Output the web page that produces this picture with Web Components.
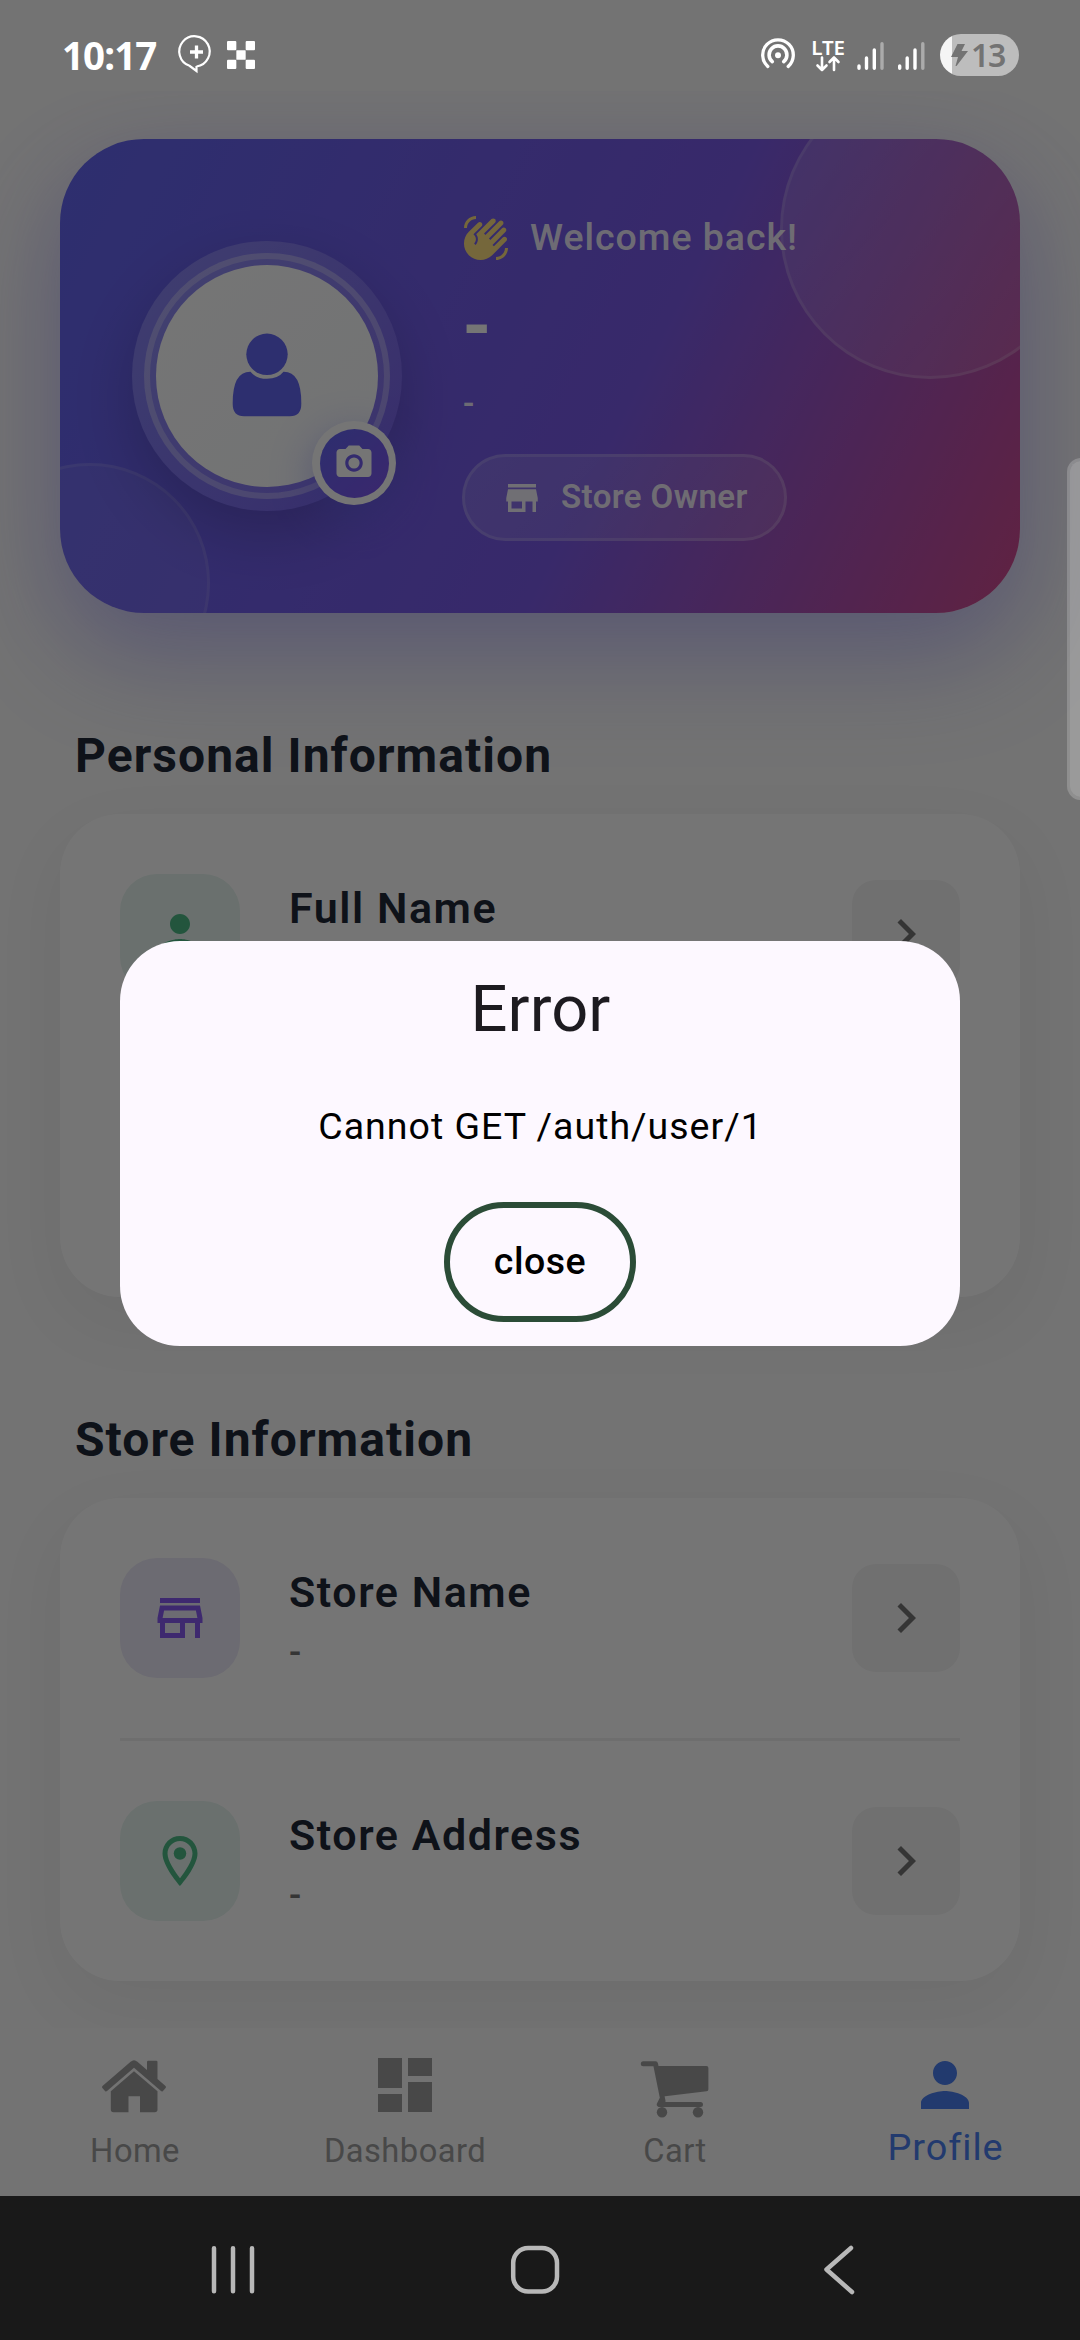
<!DOCTYPE html>
<html lang="en">
<head>
<meta charset="utf-8">
<title>Profile</title>
<style>
  html, body { margin: 0; padding: 0; }
  body { width: 1080px; height: 2340px; overflow: hidden; background: #fafafa; font-family: Roboto, "Liberation Sans", sans-serif; }
</style>
</head>
<body>
<profile-app></profile-app>
<script>
const define = (name, html, setup) => customElements.define(name, class extends HTMLElement {
  constructor() {
    super();
    const t = document.createElement('template');
    t.innerHTML = html;
    this.attachShadow({ mode: 'open' }).append(t.content.cloneNode(true));
  }
  connectedCallback() { if (setup) setup(this, this.shadowRoot); }
});

const ICONS = {
  person: '<path d="M12 12c2.21 0 4-1.79 4-4s-1.79-4-4-4-4 1.79-4 4 1.79 4 4 4zm0 2c-2.67 0-8 1.34-8 4v2h16v-2c0-2.66-5.33-4-8-4z"/>',
  chevron: '<path d="M10 6L8.59 7.41 13.17 12l-4.58 4.59L10 18l6-6z"/>',
  store: '<path d="M20 4H4v2h16V4zm1 10v-2l-1-5H4l-1 5v2h1v6h10v-6h4v6h2v-6h1zm-9 4H6v-4h6v4z"/>',
  storeOutline: '<path d="M18.36 9l.6 3H5.04l.6-3h12.72M20 4H4v2h16V4zm0 3H4l-1 5v2h1v6h10v-6h4v6h2v-6h1v-2l-1-5zM6 18v-4h6v4H6z"/>',
  place: '<path d="M12 2C8.13 2 5 5.13 5 9c0 5.25 7 13 7 13s7-7.75 7-13c0-3.87-3.13-7-7-7zM7 9c0-2.76 2.24-5 5-5s5 2.24 5 5c0 2.88-2.88 7.19-5 9.88C9.92 16.21 7 11.85 7 9z"/><circle cx="12" cy="9" r="2.5"/>',
  camera: '<circle cx="12" cy="12" r="3.2"/><path d="M9 2L7.17 4H4c-1.1 0-2 .9-2 2v12c0 1.1.9 2 2 2h16c1.1 0 2-.9 2-2V6c0-1.1-.9-2-2-2h-3.17L15 2H9zm3 15c-2.76 0-5-2.24-5-5s2.24-5 5-5 5 2.24 5 5-2.24 5-5 5z"/>',
  dashboard: '<path d="M3 13h8V3H3v10zm0 8h8v-6H3v6zm10 0h8V11h-8v10zm0-18v6h8V3h-8z"/>',
  wave: '<path d="M23 17c0 3.31-2.69 6-6 6v-1.5c2.48 0 4.5-2.02 4.5-4.5H23zM1 7c0-3.31 2.69-6 6-6v1.5C4.52 2.5 2.5 4.52 2.5 7H1zM8.01 4.32l-4.6 4.6c-3.22 3.22-3.22 8.45 0 11.67s8.45 3.22 11.67 0l7.07-7.07c.49-.49.49-1.28 0-1.77-.49-.49-1.28-.49-1.77 0l-4.42 4.42-.71-.71 6.54-6.54c.49-.49.49-1.28 0-1.77s-1.28-.49-1.77 0l-5.83 5.83-.71-.71 6.89-6.89c.49-.49.49-1.28 0-1.77s-1.28-.49-1.77 0l-6.89 6.89-.69-.69 5.48-5.48c.49-.49.49-1.28 0-1.77s-1.28-.49-1.77 0l-7.62 7.62c1.22 1.57 1.11 3.84-.33 5.28l-.71-.71c1.17-1.17 1.17-3.07 0-4.24l-.35-.35 4.07-4.07c.49-.49.49-1.28 0-1.77-.48-.48-1.27-.48-1.76 0z"/>',
  /* the two below are on a 72-unit grid */
  home: '<path d="M31.6 12.7Q35 9.6 38.400 12.700L48 21V13q0-1.300 1.300-1.300h7.900q1.300 0 1.300 1.300V30l8 7q1 1 .1 2l-2.600 3q-1 1-2 .1L35 18.800 8 42.100q-1 .9-2-.1l-2.600-3q-.9-1 .1-2z"/><path d="M35 22.200L58.500 42.300V60.500q0 2.700-2.700 2.700H41V47.200H29.500V63.200H14.500q-2.700 0-2.700-2.700V42.300z"/>',
  cart: '<path d="M4.300 14.700H16.500L24 52" fill="none" stroke="currentColor" stroke-width="5" stroke-linecap="round" stroke-linejoin="round"/><path d="M18 17H67.500q1.900 0 1.900 1.900V40.300q0 1.800-1.800 2L24 47.500z"/><path d="M22.800 50.500L20.300 55.400H61.500" fill="none" stroke="currentColor" stroke-width="5" stroke-linecap="round" stroke-linejoin="round"/><circle cx="23" cy="63.200" r="5.200"/><circle cx="59" cy="63.200" r="5.200"/>'
};
define('ui-icon', `<style>
  :host { display: block; flex: none; }
  svg { display: block; fill: currentColor; }
</style><svg></svg>`, (el, root) => {
  const n = el.getAttribute('name'), s = el.getAttribute('size') || 60, g = (n === 'home' || n === 'cart') ? 72 : 24;
  const svg = root.querySelector('svg');
  svg.setAttribute('viewBox', `0 0 ${g} ${g}`);
  svg.setAttribute('width', s);
  svg.setAttribute('height', s);
  svg.innerHTML = ICONS[n];
});

define('status-bar', `<style>
  :host { display: flex; align-items: center; height: 91px; color: #fff; box-sizing: border-box; padding: 19px 61px 0 62px; justify-content: space-between; }
  .side { display: flex; align-items: center; height: 72px; }
  .time { font: 700 38.5px/72px "Noto Sans", "Open Sans", sans-serif; letter-spacing: -.9px; width: 114px; }
  .lte { width: 38px; margin: 0 10px 0 13px; display: flex; flex-direction: column; align-items: center; }
  .lte span { font: 600 20.500px/16px "Noto Sans", sans-serif; letter-spacing: -.1px; }
  svg { display: block; flex: none; }
  .bat { position: relative; width: 79px; height: 42px; border-radius: 21px; margin-left: 15px; box-sizing: border-box;
         background: linear-gradient(90deg, #f5f5f5 12px, #bdbdbd 12px); display: flex; align-items: center; padding-left: 11px; color: #737373; }
  .bat span { font: 600 32px/42px "Noto Sans", sans-serif; margin-left: 3px; letter-spacing: -1.200px; }
</style>
<div class="side">
  <div class="time">10:17</div>
  <svg width="42" height="44" viewBox="0 0 42 44" style="margin-top:-4px"><path d="M20.500 35.500v5l-7-5.200A15.200 15.200 0 1 1 20.500 36z" transform="translate(0 -.5)" fill="none" stroke="#fff" stroke-width="2.200"/><path d="M20.500 14.500v13M14 21h13" stroke="#fff" stroke-width="3.300"/></svg>
  <svg width="28" height="28" viewBox="0 0 27 27" style="margin-left:9px" fill="#fff"><rect width="9" height="9" rx="1"/><rect x="18" width="9" height="9" rx="1"/><rect x="9" y="9" width="9" height="9" rx=".5"/><rect y="18" width="9" height="9" rx="1"/><rect x="18" y="18" width="9" height="9" rx="1"/></svg>
</div>
<div class="side">
  <svg width="36" height="36" viewBox="0 0 36 36" fill="none" stroke="#fff" stroke-width="3.300" stroke-linecap="round"><path d="M7.800 29.500A15.300 15.300 0 1 1 28.200 29.500"/><path d="M12.300 24.600A8.900 8.900 0 1 1 23.700 24.600" stroke-width="3.600"/><circle cx="18" cy="18.300" r="3" fill="#fff" stroke="none"/></svg>
  <div class="lte"><span>LTE</span><svg width="26" height="17" viewBox="0 0 26 17" fill="none" stroke="#fff" stroke-width="2.600" stroke-linecap="round" stroke-linejoin="round"><path d="M7 2.500V15M2.500 10.500L7 15l4.500-4.500M19 15V2.500M14.500 7L19 2.500 23.500 7"/></svg></div>
  <svg width="68" height="32" viewBox="0 0 68 32" stroke="#fff" stroke-width="3.400" stroke-linecap="round"><path d="M2 27v2.300M9.500 19v10.300M17.300 11v18.300M42.700 27v2.300M50.200 19v10.300M58 11v18.300"/><path d="M25 4.700v24.600M65.800 4.700v24.600" opacity=".4"/></svg>
  <div class="bat"><svg width="17" height="22" viewBox="0 0 17 22" fill="#737373"><path d="M6.500 0h7.500L10.500 7H17L5.500 22H4.500L7 13H0z"/></svg><span>13</span></div>
</div>`);

define('user-avatar', `<style>
  :host { display: block; position: relative; width: 270px; height: 270px; flex: none; }
  .halo { box-sizing: border-box; width: 270px; height: 270px; padding: 12px; border-radius: 50%;
          background: linear-gradient(135deg, rgba(255,255,255,.24), rgba(255,255,255,.03)); box-shadow: 0 24px 60px rgba(0,0,0,.18); }
  .ring { box-sizing: border-box; width: 246px; height: 246px; border: 6px solid rgba(255,255,255,.32); border-radius: 50%; padding: 6px; background: rgba(255,255,255,.07); background-clip: padding-box; }
  .face { width: 222px; height: 222px; border-radius: 50%; background: linear-gradient(135deg, #fff, #f8fafc); display: flex; align-items: center; justify-content: center; }
  .face svg { display: block; margin-bottom: 8px; }
  .cam { position: absolute; left: 180px; top: 180px; width: 84px; height: 84px; box-sizing: border-box; border-radius: 50%; display: flex; align-items: center; justify-content: center;
         background: #fff; box-shadow: 0 12px 42px rgba(99,102,241,.4); }
  .cam div { width: 69px; height: 69px; border-radius: 50%; background: linear-gradient(135deg, #6366f1, #8055ee); display: flex; align-items: center; justify-content: center; color: #fff; }
</style>
<div class="halo"><div class="ring"><div class="face">
  <svg width="90" height="90" viewBox="0 0 90 90" fill="#6366f1"><circle cx="45" cy="27.300" r="20.700"/><path d="M28.500 44.800Q34 51.800 45 51.800T61.500 44.800Q79.300 44.500 79.300 76V77Q79.300 89.300 68 89.300H22Q10.700 89.300 10.700 77V76Q10.700 44.500 28.500 44.800z"/></svg>
</div></div></div>
<div class="cam"><div><ui-icon name="camera" size="42"></ui-icon></div></div>`);

define('hero-card', `<style>
  :host { display: block; height: 474px; border-radius: 84px; box-shadow: 0 45px 104px rgba(99,102,241,.3), 0 18px 90px rgba(139,92,246,.14); }
  .clip { position: relative; height: 474px; border-radius: 84px; overflow: hidden; background: linear-gradient(116.300deg, #6366f1, #7a5ae8 58%, #d24a8e); }
  .blob { position: absolute; box-sizing: border-box; border-radius: 50%; border: 3px solid rgba(255,255,255,.15); }
  .a { width: 300px; height: 300px; right: -60px; top: -60px; background: linear-gradient(135deg, rgba(255,255,255,.15), rgba(255,255,255,.08)); background-clip: padding-box; border-color: rgba(255,255,255,.24); }
  .b { width: 240px; height: 240px; left: -90px; bottom: -90px; background: rgba(255,255,255,.06); background-clip: padding-box; }
  .row { position: relative; display: flex; align-items: center; height: 474px; padding-left: 72px; gap: 60px; }
  .info { display: flex; flex-direction: column; align-items: flex-start; height: 474px; box-sizing: border-box; padding-top: 74px; color: #fff; }
  .hi { display: flex; align-items: center; gap: 20px; height: 50px; color: #ffe082; }
  .hi span { font-weight: 500; font-size: 37.500px; letter-spacing: .970px; color: rgba(255,255,255,.9); line-height: 48px; height: 50px; }
  .name { font-weight: 800; font-size: 71px; line-height: 84px; margin-top: 21px; }
  .mail { font-weight: 500; font-size: 33px; line-height: 40px; margin-top: 16px; color: rgba(255,255,255,.9); padding-left: 1px; }
  .pill { box-sizing: border-box; height: 87px; margin-top: 30px; border: 3px solid rgba(255,255,255,.28); border-radius: 44px; padding: 0 36px; display: flex; align-items: center; gap: 18px;
          background: linear-gradient(135deg, rgba(255,255,255,.14), rgba(255,255,255,.1)); background-clip: padding-box; color: rgba(255,255,255,.9); }
  .pill span { font-weight: 600; font-size: 33px; letter-spacing: .420px; line-height: 79px; height: 81px; }
</style>
<div class="clip">
  <div class="blob a"></div><div class="blob b"></div>
  <div class="row">
    <user-avatar></user-avatar>
    <div class="info">
      <div class="hi"><ui-icon name="wave" size="48"></ui-icon><span>Welcome back!</span></div>
      <div class="name">-</div>
      <div class="mail">-</div>
      <div class="pill"><ui-icon name="store" size="42"></ui-icon><span>Store Owner</span></div>
    </div>
  </div>
</div>`);

define('section-title', `<style>
  :host { display: block; padding-left: 15px; font-weight: 700; font-size: 48px; letter-spacing: 1.050px; line-height: 56px; color: #1f2937; }
</style><slot></slot>`);

define('info-card', `<style>
  :host { display: flex; flex-direction: column; gap: 60px; box-sizing: border-box; padding: 60px; background: #fff; border-radius: 60px; box-shadow: 0 24px 72px rgba(0,0,0,.06); }
</style><slot></slot>`);

define('info-divider', `<style>:host { display: block; height: 3px; background: #f0f0f0; }</style>`);

define('info-row', `<style>
  :host { display: flex; align-items: center; height: 120px; }
  .tile { width: 120px; height: 120px; border-radius: 37px; display: flex; align-items: center; justify-content: center; color: var(--tint); background: var(--wash); }
  .text { flex: 1; padding-left: 49px; height: 120px; }
  .label { font-weight: 600; font-size: 43px; letter-spacing: 1.550px; line-height: 50px; padding-top: 9px; color: #1f2937; }
  .value { font-weight: 500; font-size: 36px; line-height: 42px; margin-top: 15px; color: #757575; }
  .go { width: 108px; height: 108px; border-radius: 24px; background: #f5f5f5; display: flex; align-items: center; justify-content: center; color: #757575; }
</style>
<div class="tile"><slot></slot></div>
<div class="text"><div class="label"></div><div class="value"></div></div>
<div class="go"><ui-icon name="chevron" size="60"></ui-icon></div>`, (el, root) => {
  root.querySelector('.label').textContent = el.getAttribute('label');
  root.querySelector('.value').textContent = el.getAttribute('value') || '';
});

define('nav-item', `<style>
  :host { display: flex; flex-direction: column; align-items: center; width: 270px; box-sizing: border-box; padding-top: 21px; color: #9e9e9e; font-size: 32.700px; letter-spacing: .450px; }
  .l { line-height: 40px; margin-top: 10px; }
  :host([active]) { color: #4a7eef; font-size: 37.800px; letter-spacing: .950px; }
  :host([active]) .l { margin-top: 6px; padding-left: 1px; }
</style><ui-icon></ui-icon><div class="l"><slot></slot></div>`, (el, root) => {
  const i = document.createElement('ui-icon');
  i.setAttribute('name', el.getAttribute('icon'));
  i.setAttribute('size', 72);
  root.querySelector('ui-icon').replaceWith(i);
});

define('bottom-nav', `<style>
  :host { display: flex; height: 168px; background: #fafafa; position: relative; }
</style><slot></slot>`);

define('system-nav', `<style>
  :host { display: flex; height: 144px; background: #191919; align-items: center; padding: 0 204px; justify-content: space-between; }
  svg { display: block; fill: none; stroke: #b8b8b8; stroke-width: 4.500; stroke-linecap: round; stroke-linejoin: round; }
</style>
<svg width="58" height="60" viewBox="0 0 58 60"><path d="M10 10.200v43M29 10.200v43M48 10.200v43"/></svg>
<svg width="60" height="60" viewBox="0 0 60 60"><rect x="4.200" y="10" width="43.800" height="43.500" rx="15"/></svg>
<svg width="60" height="60" viewBox="0 0 60 60"><path d="M35 10L10.500 31.500 36 54"/></svg>`);

define('error-dialog', `<style>
  :host { display: flex; flex-direction: column; align-items: center; box-sizing: border-box; width: 840px; height: 405px; border-radius: 60px; background: #fdf8ff; color: #000; }
  .t { font-size: 65px; letter-spacing: .1px; line-height: 76px; margin-top: 30px; padding-left: 1px; color: #1d1b20; }
  .m { font-size: 37.500px; letter-spacing: 1px; line-height: 44px; margin-top: 57px; padding-left: 1px; }
  button { margin: 54px 0 0; width: 192px; height: 120px; box-sizing: border-box; border: 6px solid #2b4c37; border-radius: 60px; background: none; padding: 0 0 2px; font: 500 37.5px/106px Roboto, sans-serif; letter-spacing: .500px; color: #000; }
</style>
<div class="t">Error</div>
<div class="m">Cannot GET /auth/user/1</div>
<button>close</button>`);

define('profile-app', `<style>
  :host { display: block; position: relative; width: 1080px; height: 2340px; overflow: hidden; background: #fafafa; }
  .page { display: flex; flex-direction: column; height: 2340px; }
  .top { height: 91px; flex: none; }
  .body { height: 1937px; flex: none; box-sizing: border-box; padding: 48px 60px 0; overflow: hidden; }
  .body > section-title:nth-of-type(1) { margin-top: 115px; }
  .s1 { margin-top: 30px; height: 483px; }
  .t2 { margin-top: 115px; }
  .s2 { margin-top: 30px; }
  .scrim { position: absolute; inset: 0 0 144px 0; background: rgba(0,0,0,.54); display: flex; flex-direction: column; }
  .scrim error-dialog { margin: 850px auto 0; }
  .edge { position: absolute; right: -15px; top: 458px; width: 28px; height: 342px; box-sizing: border-box; border: 3px solid rgba(255,255,255,.2); border-radius: 15px; background: rgba(255,255,255,.28); background-clip: padding-box; }
</style>
<div class="page">
  <div class="top"></div>
  <div class="body">
    <hero-card></hero-card>
    <section-title>Personal Information</section-title>
    <info-card class="s1">
      <info-row label="Full Name" style="--tint:#4cb986;--wash:#e6f5ef"><ui-icon name="person"></ui-icon></info-row>
      <info-divider></info-divider>
    </info-card>
    <section-title class="t2">Store Information</section-title>
    <info-card class="s2">
      <info-row label="Store Name" value="-" style="--tint:#875bf2;--wash:#ece9f8"><ui-icon name="storeOutline"></ui-icon></info-row>
      <info-divider></info-divider>
      <info-row label="Store Address" value="-" style="--tint:#4cb986;--wash:#e6f5ef"><ui-icon name="place"></ui-icon></info-row>
    </info-card>
  </div>
  <bottom-nav>
    <nav-item icon="home">Home</nav-item>
    <nav-item icon="dashboard">Dashboard</nav-item>
    <nav-item icon="cart">Cart</nav-item>
    <nav-item icon="person" active>Profile</nav-item>
  </bottom-nav>
  <system-nav></system-nav>
</div>
<div class="scrim"><status-bar></status-bar><error-dialog></error-dialog></div>
<div class="edge"></div>`);
</script>
</body>
</html>
